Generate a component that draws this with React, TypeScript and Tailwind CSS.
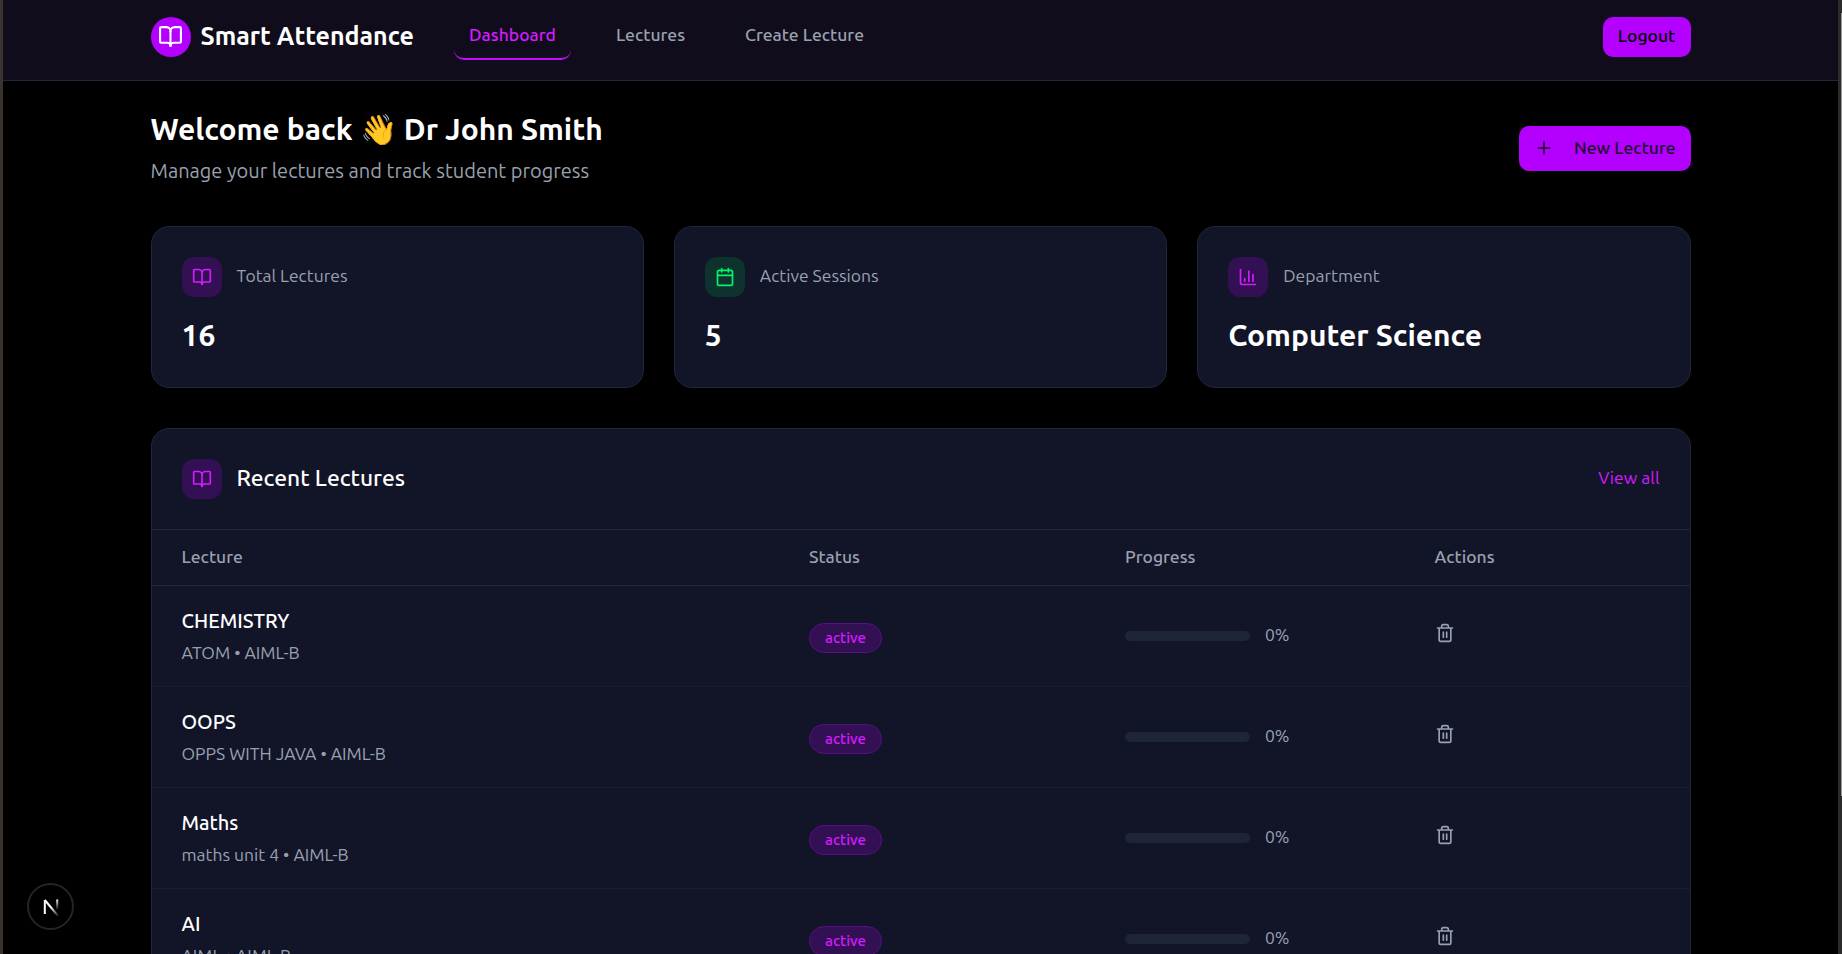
import { BookOpen, Calendar, Plus } from "lucide-react";
import type { ReactNode } from "react";

const lectures = [
  { name: "CHEMISTRY", detail: "ATOM • AIML-B" },
  { name: "OOPS", detail: "OPPS WITH JAVA • AIML-B" },
  { name: "Maths", detail: "maths unit 4 • AIML-B" },
  { name: "AI", detail: "AIML • AIML-B" },
];

const ChartIcon = () => (
  <svg viewBox="0 0 24 24" className="size-5" fill="none" stroke="currentColor" strokeWidth="2" strokeLinecap="round" strokeLinejoin="round">
    <path d="M3 3v16a2 2 0 0 0 2 2h16M18 17V9M13 17V5M8 17v-3" />
  </svg>
);

const TrashIcon = () => (
  <svg viewBox="0 0 24 24" className="size-5" fill="none" stroke="currentColor" strokeWidth="2" strokeLinecap="round" strokeLinejoin="round">
    <path d="M3 6h18M19 6v14a2 2 0 0 1-2 2H7a2 2 0 0 1-2-2V6M8 6V4a2 2 0 0 1 2-2h4a2 2 0 0 1 2 2v2M10 11v6M14 11v6" />
  </svg>
);

const PurpleBox = ({ children }: { children: ReactNode }) => (
  <div className="flex size-10 items-center justify-center rounded-[12px] bg-[#330f53] text-[#d41cff]">{children}</div>
);

function StatCard({ icon, label, value }: { icon: ReactNode; label: string; value: string }) {
  return (
    <div className="h-[162px] rounded-[18px] border border-[#20273b] bg-[#121428] p-[30px]">
      <div className="flex items-center gap-[15px]">
        {icon}
        <span className="-mt-[2px] text-[17.5px] leading-6 text-[#99a1af]">{label}</span>
      </div>
      <div className="mt-5 text-[30px] leading-9 font-semibold text-white">{value}</div>
    </div>
  );
}

export default function App() {
  return (
    <div className="flex h-[954px] overflow-hidden bg-black font-['Ubuntu','Open_Sans',sans-serif] text-white">
      <div className="w-[3px] shrink-0 bg-[#3a322c]" />
      <div className="relative min-w-0 flex-1">
        <header className="flex h-[81px] items-start border-b border-[#20273b] bg-[#110c1b] pt-[17px] pr-[147px] pl-[147.5px]">
          <div className="flex size-10 items-center justify-center rounded-full bg-[#b300ff]">
            <BookOpen size={25} strokeWidth={2} className="-mt-px -ml-px" />
          </div>
          <div className="ml-[10px] w-[253.5px] text-[25px] leading-[38px] font-semibold">Smart Attendance</div>
          <nav className="flex gap-[30px] text-[17.5px] leading-6 font-medium whitespace-nowrap text-[#99a1af]">
            <a className="-mt-[2px] h-[45px] w-[117px] rounded-[10px] border-b-2 border-[#c80aff] pt-2 text-center text-[#d41cff]">Dashboard</a>
            <a className="mt-[6px] w-[99px] text-center">Lectures</a>
            <a className="mt-[6px] w-[149px] text-center">Create Lecture</a>
          </nav>
          <button className="ml-auto h-10 w-[88px] rounded-[10px] bg-[#b300ff] pr-px pb-px text-[17.5px] font-medium text-black">Logout</button>
        </header>

        <main className="ml-[147.5px] w-[1540px] pt-[29px]">
          <section className="flex h-[116px] justify-between">
            <div>
              <h1 className="text-[30px] leading-[38px] font-semibold">Welcome back 👋 Dr John Smith</h1>
              <p className="mt-[9px] text-[20px] leading-7 text-[#99a1af]">Manage your lectures and track student progress</p>
            </div>
            <button className="mt-4 flex h-[45px] w-[172px] items-center rounded-[10px] bg-[#b300ff] pl-[15px] text-[17.5px] font-medium text-[#1d1029]">
              <Plus size={20} strokeWidth={2} className="-mt-px" />
              <span className="ml-[20.5px] pb-px whitespace-nowrap">New Lecture</span>
            </button>
          </section>

          <section className="grid grid-cols-3 gap-[30px]">
            <StatCard icon={<PurpleBox><BookOpen size={20} /></PurpleBox>} label="Total Lectures" value="16" />
            <StatCard
              icon={<div className="flex size-10 items-center justify-center rounded-[12px] bg-[#0e322d] text-[#00f56e]"><Calendar size={20} /></div>}
              label="Active Sessions"
              value="5"
            />
            <StatCard icon={<PurpleBox><ChartIcon /></PurpleBox>} label="Department" value="Computer Science" />
          </section>

          <section className="mt-10 h-[600px] rounded-t-[18px] border border-[#20273b] bg-[#121428]">
            <div className="flex h-[101px] items-center border-b border-[#20273b] px-[30px]">
              <PurpleBox><BookOpen size={20} /></PurpleBox>
              <h2 className="ml-[15px] pb-[2px] text-[22.8px] leading-8 font-medium">Recent Lectures</h2>
              <a className="ml-auto pb-px text-[17.5px] text-[#d41cff]">View all</a>
            </div>
            <div className="grid h-14 grid-cols-[627.5px_316px_309.5px_1fr] items-center border-b border-[#20273b] pl-[30px] text-[17.5px] font-medium text-[#99a1af]">
              <span>Lecture</span>
              <span>Status</span>
              <span>Progress</span>
              <span>Actions</span>
            </div>
            {lectures.map((l) => (
              <div key={l.name} className="grid h-[101px] grid-cols-[627.5px_316px_309.5px_1fr] border-b border-[#191d30] pl-[30px]">
                <div className="pt-5">
                  <div className="text-[20px] leading-[30px] font-medium">{l.name}</div>
                  <div className="mt-[5px] text-[17.5px] leading-6 text-[#99a1af]">{l.detail}</div>
                </div>
                <div className="pt-[37px]">
                  <span className="flex h-[30px] w-[73px] items-center justify-center rounded-full border border-[#590d86] bg-[#330f53] text-[15px] font-medium text-[#d41cff]">active</span>
                </div>
                <div className="flex h-[100px] items-center gap-[15px] text-[17.5px] text-[#99a1af]">
                  <div className="h-[10px] w-[125px] rounded-full bg-[#1e2536]" />
                  <span className="pb-px">0%</span>
                </div>
                <div className="pt-[37px] text-[#99a1af]"><TrashIcon /></div>
              </div>
            ))}
          </section>
        </main>

        <div className="absolute top-[883px] left-6 flex size-[47px] items-center justify-center rounded-full border-2 border-[#242424] bg-black">
          <svg width="18" height="18" viewBox="0 0 18 18" fill="none">
            <defs>
              <linearGradient id="nd" x1="9" y1="9" x2="16" y2="18" gradientUnits="userSpaceOnUse"><stop stopColor="#fff" /><stop offset="1" stopColor="#fff" stopOpacity="0.1" /></linearGradient>
              <linearGradient id="nv" x1="15" y1="1" x2="15" y2="12" gradientUnits="userSpaceOnUse"><stop stopColor="#fff" /><stop offset="1" stopColor="#fff" stopOpacity="0" /></linearGradient>
            </defs>
            <path d="M2.8 16V2" stroke="#fff" strokeWidth="2" />
            <path d="M2.8 2L16 18" stroke="url(#nd)" strokeWidth="2" />
            <path d="M15.2 1.5V12" stroke="url(#nv)" strokeWidth="2" />
          </svg>
        </div>
      </div>
      <div className="w-1 shrink-0 bg-[#2b2b2b]">
        <div className="mt-[13px] ml-[3px] h-[783px] w-px bg-[#9a9a9a]" />
      </div>
    </div>
  );
}
